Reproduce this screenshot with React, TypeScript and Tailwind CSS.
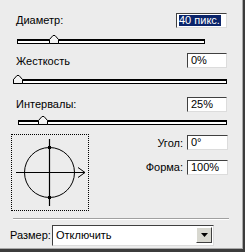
import React from 'react';

function Field({ value, selected, w = 40 }: { value: string; selected?: boolean; w?: number }) {
  return (
    <div
      className="h-[15px] bg-white border border-t-[#404040] border-l-[#404040] border-r-[#dcdcdc] border-b-[#dcdcdc] flex items-center pl-[2px] text-[11px] leading-none"
      style={{ width: w }}
    >
      {selected ? (
        <span className="bg-[#0a246a] text-white h-[11px] flex items-center pr-[1px]">{value}</span>
      ) : (
        <span className="pl-[1px]">{value}</span>
      )}
    </div>
  );
}

function Slider({ ml, w, pos, mt }: { ml: number; w: number; pos: number; mt: number }) {
  return (
    <div className="relative h-[10px]" style={{ marginLeft: ml, width: w, marginTop: mt }}>
      <div className="absolute left-0 right-0 bottom-0 h-[5px] bg-white border border-black border-t-2" />
      <svg className="absolute top-0" style={{ left: pos }} width="10" height="10" viewBox="0 0 10 10">
        <polygon points="0.5,9.5 0.5,5.5 4,1.5 6,1.5 9.5,5.5 9.5,9.5" fill="#f4f4f4" stroke="#000" strokeWidth="1" />
      </svg>
    </div>
  );
}

export default function App() {
  return (
    <div className="w-[245px] h-[252px] border-r-2 border-b-[3px] border-[#3c3c3c] font-['Liberation_Sans',sans-serif] text-black">
      <div className="h-full bg-[#ececec] border-r border-b border-[#a8a8a8] flex flex-col">
        {/* Диаметр */}
        <div className="flex items-center justify-between pl-[16px] pr-[15px] mt-[12px]">
          <span className="text-[11px]">Диаметр:</span>
          <Field value="40 пикс." selected w={51} />
        </div>
        <Slider ml={17} w={188} pos={32} mt={5} />

        {/* Жесткость */}
        <div className="flex items-center justify-between pl-[16px] pr-[15px] mt-[9px]">
          <span className="text-[11px]">Жесткость</span>
          <Field value="0%" />
        </div>
        <Slider ml={13} w={214} pos={0} mt={5} />

        {/* Интервалы */}
        <div className="flex items-center justify-between pl-[16px] pr-[15px] mt-[12px]">
          <span className="text-[11px]">Интервалы:</span>
          <Field value="25%" />
        </div>
        <Slider ml={18} w={209} pos={20} mt={2} />

        {/* preview + angle/roundness */}
        <div className="flex mt-[9px] pl-[11px] pr-[14px]">
          <div className="w-[78px] h-[77px] border border-dotted border-black">
            <svg width="76" height="75" viewBox="0 0 76 75">
              <circle cx="37.5" cy="37.5" r="25" fill="none" stroke="#000" strokeWidth="1" />
              <line x1="37.5" y1="4" x2="37.5" y2="71" stroke="#000" strokeWidth="1.2" />
              <line x1="4" y1="37.5" x2="73" y2="37.5" stroke="#000" strokeWidth="1.2" />
              <polyline points="66,32.5 73,37.5 66,42.5" fill="none" stroke="#000" strokeWidth="1" />
              <rect x="36" y="11" width="3" height="3" fill="#000" />
              <rect x="36" y="61" width="3" height="3" fill="#000" />
            </svg>
          </div>
          <div className="flex-1 flex flex-col items-end mt-[1px]">
            <div className="flex items-center gap-[4px]">
              <span className="text-[11px]">Угол:</span>
              <Field value="0°" w={41} />
            </div>
            <div className="flex items-center gap-[4px] mt-[8px]">
              <span className="text-[11px]">Форма:</span>
              <Field value="100%" w={41} />
            </div>
          </div>
        </div>

        {/* separator */}
        <div className="mx-[13px] mt-[7px] border-t border-[#a0a0a0] border-b border-b-white" />

        {/* Размер */}
        <div className="flex items-center pl-[10px] mt-[5px]">
          <span className="text-[11px] w-[42px]">Размер:</span>
          <div className="w-[162px] h-[21px] bg-white border border-t-[#404040] border-l-[#404040] border-r-[#dcdcdc] border-b-[#dcdcdc] flex items-center justify-between pl-[3px] pr-[1px]">
            <span className="text-[11px]">Отключить</span>
            <div className="w-[16px] h-[16px] bg-[#d8d8d0] border border-t-white border-l-white border-r-[#404040] border-b-[#404040] flex items-center justify-center">
              <svg width="7" height="4" viewBox="0 0 7 4">
                <polygon points="0,0 7,0 3.5,4" fill="#000" />
              </svg>
            </div>
          </div>
        </div>
      </div>
    </div>
  );
}
